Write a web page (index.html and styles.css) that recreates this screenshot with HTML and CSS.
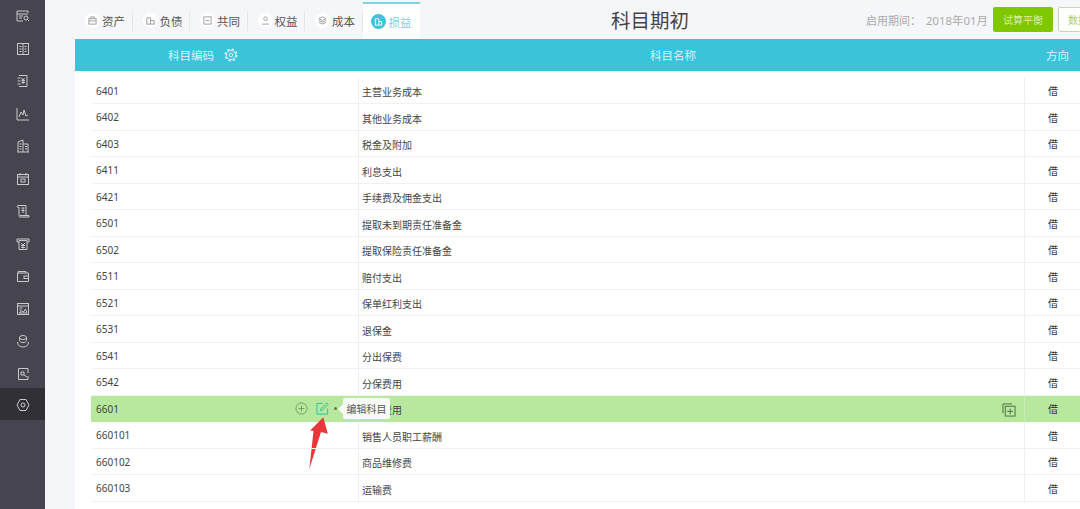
FILE: index.html
```html
<!DOCTYPE html>
<html lang="zh-CN">
<head>
  <meta charset="utf-8">
  <title>科目期初</title>
  <link rel="stylesheet" href="styles.css">
</head>
<body>
  <div class="app">
    <nav class="sidebar">
      <div class="side-item"><svg viewBox="0 0 14 14"><path d="M12 4V2H1v10h6M1 5h11M3 7h4M3 9h3"/><circle cx="10" cy="9" r="2"/><path d="M11.5 10.5L13 12"/></svg></div>
      <div class="side-item"><svg viewBox="0 0 14 14"><rect x="1.5" y="1.5" width="11" height="11"/><path d="M7 1.5v11M3.5 4.5h2M3.5 7h2M3.5 9.5h2M8.5 4.5h2M8.5 7h2M8.5 9.5h2"/></svg></div>
      <div class="side-item"><svg viewBox="0 0 14 14"><path d="M3 1.5h8v11H3M1.5 4h3M1.5 7h3M1.5 10h3M5.5 4l1.5 2 1.5-2M5.5 6.5h3.5M5.5 8.5h3.5M7 6v4"/></svg></div>
      <div class="side-item"><svg viewBox="0 0 14 14"><path d="M1 1v12h12M3 10l2-5 2 3 1-5 2 6 2-1"/></svg></div>
      <div class="side-item"><svg viewBox="0 0 14 14"><path d="M2 13V3l5-2v12M7 5h5v8M1 13h12M3.5 5h2M3.5 7.5h2M3.5 10h2M9 7.5h2M9 10h2"/></svg></div>
      <div class="side-item"><svg viewBox="0 0 14 14"><rect x="1.5" y="2.5" width="11" height="10"/><path d="M1.5 5h11M4 1v2.5M10 1v2.5"/><rect x="5" y="7" width="4" height="3"/></svg></div>
      <div class="side-item"><svg viewBox="0 0 14 14"><path d="M2 1.5h8v10H4M2 1.5c-1 0-1 2 0 2h1V12c0 1 1 1 2 1h8v-1.5H5M5.5 4h3M5.5 6.5h3M7 4v5"/></svg></div>
      <div class="side-item"><svg viewBox="0 0 14 14"><path d="M1 2h12v3h-2M1 2v3h2M3 3.5h8v9H3zM5 6l2 2 2-2M5 8.5h4M5 10.5h4M7 8v3.5"/></svg></div>
      <div class="side-item"><svg viewBox="0 0 14 14"><path d="M2 4V2.5h8V4M1.5 4h11v8.5h-11z"/><rect x="8" y="7" width="4.5" height="2.5"/></svg></div>
      <div class="side-item"><svg viewBox="0 0 14 14"><rect x="1.5" y="1.5" width="11" height="11"/><path d="M1.5 4h11M3.5 6h3M3.5 8h2M3 11l2.5-2 2 1 2-3 1.5 4z"/></svg></div>
      <div class="side-item"><svg viewBox="0 0 14 14"><ellipse cx="7" cy="3.5" rx="3.5" ry="2"/><path d="M3.5 3.5v3c0 1 1.5 2 3.5 2s3.5-1 3.5-2v-3M1.5 8c0 3 2 5 5.5 5s5.5-2 5.5-5"/></svg></div>
      <div class="side-item"><svg viewBox="0 0 14 14"><path d="M12 6V1.5H2.5v11H12V9"/><path d="M5 5h3v3H5zM8 8l3 2"/></svg></div>
      <div class="side-item active"><svg viewBox="0 0 14 14"><path d="M4 1.5h6L13 7l-3 5.5H4L1 7z"/><circle cx="7" cy="7" r="2"/></svg></div>
    </nav>

    <main class="main">
      <header class="topbar">
        <div class="tabs">
          <div class="tab"><span class="tab-icon"><svg viewBox="0 0 10 10"><rect x="1" y="3" width="8" height="6"/><path d="M3 3V1h4v2M1 5.5h8"/></svg></span>资产</div>
          <div class="tab"><span class="tab-icon"><svg viewBox="0 0 10 10"><path d="M1 9V2h4v7M5 5h4v4M0 9h10"/></svg></span>负债</div>
          <div class="tab"><span class="tab-icon"><svg viewBox="0 0 10 10"><rect x="1" y="1" width="8" height="8"/><path d="M3 5h4"/></svg></span>共同</div>
          <div class="tab"><span class="tab-icon"><svg viewBox="0 0 10 10"><circle cx="5" cy="3" r="2"/><path d="M1 9h8"/></svg></span>权益</div>
          <div class="tab"><span class="tab-icon"><svg viewBox="0 0 10 10"><path d="M5 1l4 2-4 2-4-2zM1 5l4 2 4-2M1 7l4 2 4-2"/></svg></span>成本</div>
          <div class="tab active"><span class="tab-icon"><svg viewBox="0 0 10 10"><path d="M1.5 9V2h4v7M5.5 5h3v4M1 9h8"/></svg></span>损益</div>
        </div>
        <h1 class="title">科目期初</h1>
        <div class="period">启用期间：<span class="period-value">2018年01月</span></div>
        <button class="btn btn-primary">试算平衡</button>
        <button class="btn btn-outline">数据导入</button>
      </header>

      <div class="table-head">
        <div class="head-code">科目编码
          <svg class="gear" viewBox="0 0 14 14"><circle class="gear-teeth" cx="7" cy="7" r="5.8"/><circle cx="7" cy="7" r="4.6"/><circle cx="7" cy="7" r="1.8"/></svg>
        </div>
        <div class="head-name">科目名称</div>
        <div class="head-dir">方向</div>
      </div>

      <div class="table-body">
        <div class="row"><div class="code">6401</div><div class="name">主营业务成本</div><div class="dir">借</div></div>
        <div class="row"><div class="code">6402</div><div class="name">其他业务成本</div><div class="dir">借</div></div>
        <div class="row"><div class="code">6403</div><div class="name">税金及附加</div><div class="dir">借</div></div>
        <div class="row"><div class="code">6411</div><div class="name">利息支出</div><div class="dir">借</div></div>
        <div class="row"><div class="code">6421</div><div class="name">手续费及佣金支出</div><div class="dir">借</div></div>
        <div class="row"><div class="code">6501</div><div class="name">提取未到期责任准备金</div><div class="dir">借</div></div>
        <div class="row"><div class="code">6502</div><div class="name">提取保险责任准备金</div><div class="dir">借</div></div>
        <div class="row"><div class="code">6511</div><div class="name">赔付支出</div><div class="dir">借</div></div>
        <div class="row"><div class="code">6521</div><div class="name">保单红利支出</div><div class="dir">借</div></div>
        <div class="row"><div class="code">6531</div><div class="name">退保金</div><div class="dir">借</div></div>
        <div class="row"><div class="code">6541</div><div class="name">分出保费</div><div class="dir">借</div></div>
        <div class="row"><div class="code">6542</div><div class="name">分保费用</div><div class="dir">借</div></div>
        <div class="row selected">
          <div class="code">6601
            <div class="actions">
              <svg class="act-add" viewBox="0 0 14 14"><circle cx="7" cy="7" r="6"/><path d="M7 4v6M4 7h6"/></svg>
              <svg class="act-edit" viewBox="0 0 14 14"><path d="M7 1.5H1V13h11.5V7"/><path d="M5 9.5l.5-2.5L11.5 1 13 2.5l-6 6z"/></svg>
            </div>
          </div>
          <div class="name">销售费用
            <svg class="act-copy" viewBox="0 0 15 15"><path d="M1 11V1h10"/><rect x="3.5" y="3.5" width="10.5" height="10.5"/><path d="M8.75 6v6M5.75 9h6"/></svg>
          </div>
          <div class="dir">借</div>
          <div class="tooltip">编辑科目</div>
          <svg class="arrow" viewBox="0 0 22 56"><path d="M16.3 1.3L20.8 17.8 14 16 2.3 53.3 6.5 15 3.2 14.5z"/></svg>
        </div>
        <div class="row"><div class="code">660101</div><div class="name">销售人员职工薪酬</div><div class="dir">借</div></div>
        <div class="row"><div class="code">660102</div><div class="name">商品维修费</div><div class="dir">借</div></div>
        <div class="row"><div class="code">660103</div><div class="name">运输费</div><div class="dir">借</div></div>
      </div>
    </main>
  </div>
</body>
</html>
```

FILE: styles.css
```css
html, body {
  margin: 0;
  height: 100%;
  overflow: hidden;
}
body {
  font-family: "Noto Sans", "Noto Sans CJK SC", sans-serif;
  font-size: 10px;
  color: #444;
  background: #f5f6fa;
}
svg {
  fill: none;
  stroke: currentColor;
  stroke-width: 1;
}
.app {
  display: flex;
  height: 100vh;
}

/* left menu */
.sidebar {
  width: 45px;
  flex-shrink: 0;
  background: #45444f;
}
.side-item {
  height: 32.5px;
  box-sizing: border-box;
  display: flex;
  align-items: center;
  justify-content: center;
  color: #c9c9cd;
}
.side-item svg {
  width: 14px;
  height: 14px;
}
.side-item.active {
  margin-top: -2.5px;
  padding-top: 2.5px;
  background: #303036;
}

.main {
  flex: 1;
  min-width: 0;
  padding-left: 30px;
  overflow: hidden;
  display: flex;
  flex-direction: column;
}

/* top bar */
.topbar {
  height: 39px;
  display: flex;
  align-items: center;
  flex-shrink: 0;
}
.tabs {
  display: flex;
  align-self: flex-end;
  height: 37px;
}
.tab {
  width: 57.5px;
  box-sizing: border-box;
  display: flex;
  align-items: center;
  padding-left: 10px;
  gap: 2px;
  font-size: 11.5px;
  color: #555;
  position: relative;
}
.tab::after {
  content: "";
  position: absolute;
  right: 0;
  top: 9px;
  bottom: 8px;
  border-right: 1px solid #e6e6e9;
}
.tab-icon {
  width: 15px;
  height: 15px;
  border-radius: 50%;
  background: #fff;
  color: #999;
  display: flex;
  align-items: center;
  justify-content: center;
}
.tab-icon svg {
  width: 9px;
  height: 9px;
}
.tab.active {
  background: #fff;
  color: #7fd3e3;
  border-top: 2px solid #7fd3e3;
  padding-left: 8px;
  gap: 3px;
}
.tab.active::after {
  display: none;
}
.tab.active .tab-icon {
  background: #3ec3dc;
  color: #fff;
}
.title {
  margin: 0 0 0 191px;
  font-size: 19.5px;
  font-weight: 400;
  color: #444;
  white-space: nowrap;
}
.period {
  margin-left: 177px;
  font-size: 11px;
  color: #aaa;
  white-space: nowrap;
}
.period-value {
  font-size: 11.4px;
  margin-left: 5px;
}
.btn {
  flex-shrink: 0;
  height: 25px;
  border-radius: 2px;
  font-family: inherit;
  font-size: 10px;
  padding: 0;
}
.btn-primary {
  width: 60px;
  margin-left: 5px;
  border: none;
  background: #7fc700;
  color: #d8efae;
}
.btn-outline {
  width: 60px;
  margin-left: 5px;
  border: 1px solid #c6dca8;
  background: #fff;
  color: #a9cc6b;
}

/* table */
.table-head {
  height: 32px;
  flex-shrink: 0;
  display: grid;
  grid-template-columns: 283px 666px 1fr;
  align-items: center;
  background: #3bc3dc;
  color: #d9f4f8;
  font-size: 11.5px;
}
.head-code {
  padding-left: 93px;
  display: flex;
  align-items: center;
  gap: 10px;
}
.gear {
  width: 14px;
  height: 14px;
}
.gear-teeth {
  stroke-width: 1.5;
  stroke-dasharray: 2.3 2.25;
}
.head-name {
  padding-left: 292px;
}
.head-dir {
  padding-left: 22px;
}
.table-body {
  flex: 1;
  background: #fff;
  padding: 6.8px 0 0 16px;
}
.row {
  height: 26.5px;
  box-sizing: border-box;
  display: grid;
  grid-template-columns: 267px 667px 56px;
  border-bottom: 1px solid #f1f1f1;
  position: relative;
}
.code, .name, .dir {
  display: flex;
  align-items: center;
}
.code {
  padding-left: 5px;
}
.name {
  padding-left: 3px;
  padding-top: 2px;
  box-sizing: border-box;
  border-left: 1px solid #eee;
  border-right: 1px solid #eee;
}
.dir {
  justify-content: center;
  color: #333;
}
.row.selected {
  background: #b7e89d;
  border-bottom-color: #b7e89d;
}
.selected .name {
  border-color: #c9edb6;
}
.actions {
  margin-left: auto;
  margin-right: 29px;
  display: flex;
  align-items: center;
  gap: 8px;
}
.act-add {
  width: 13px;
  height: 13px;
  color: #6f9a5f;
}
.act-edit {
  width: 13px;
  height: 13px;
  color: #25bfa0;
}
.act-copy {
  width: 14px;
  height: 14px;
  margin-left: auto;
  margin-right: 8px;
  color: #4d6a44;
}
.tooltip {
  position: absolute;
  left: 252px;
  top: 2px;
  width: 47px;
  height: 21px;
  display: flex;
  align-items: center;
  justify-content: center;
  background: #f6faf2;
  border-radius: 2px;
  color: #555;
}
.tooltip::before {
  content: "";
  position: absolute;
  left: -5px;
  top: 6px;
  border: 5px solid transparent;
  border-left: 0;
  border-right-color: #f6faf2;
}
.tooltip::after {
  content: "";
  position: absolute;
  left: -9px;
  top: 9px;
  width: 3px;
  height: 3px;
  border-radius: 50%;
  background: #5d7a50;
}
.arrow {
  position: absolute;
  left: 216px;
  top: 20px;
  width: 22px;
  height: 56px;
  fill: #e9383a;
  stroke: none;
}
```
